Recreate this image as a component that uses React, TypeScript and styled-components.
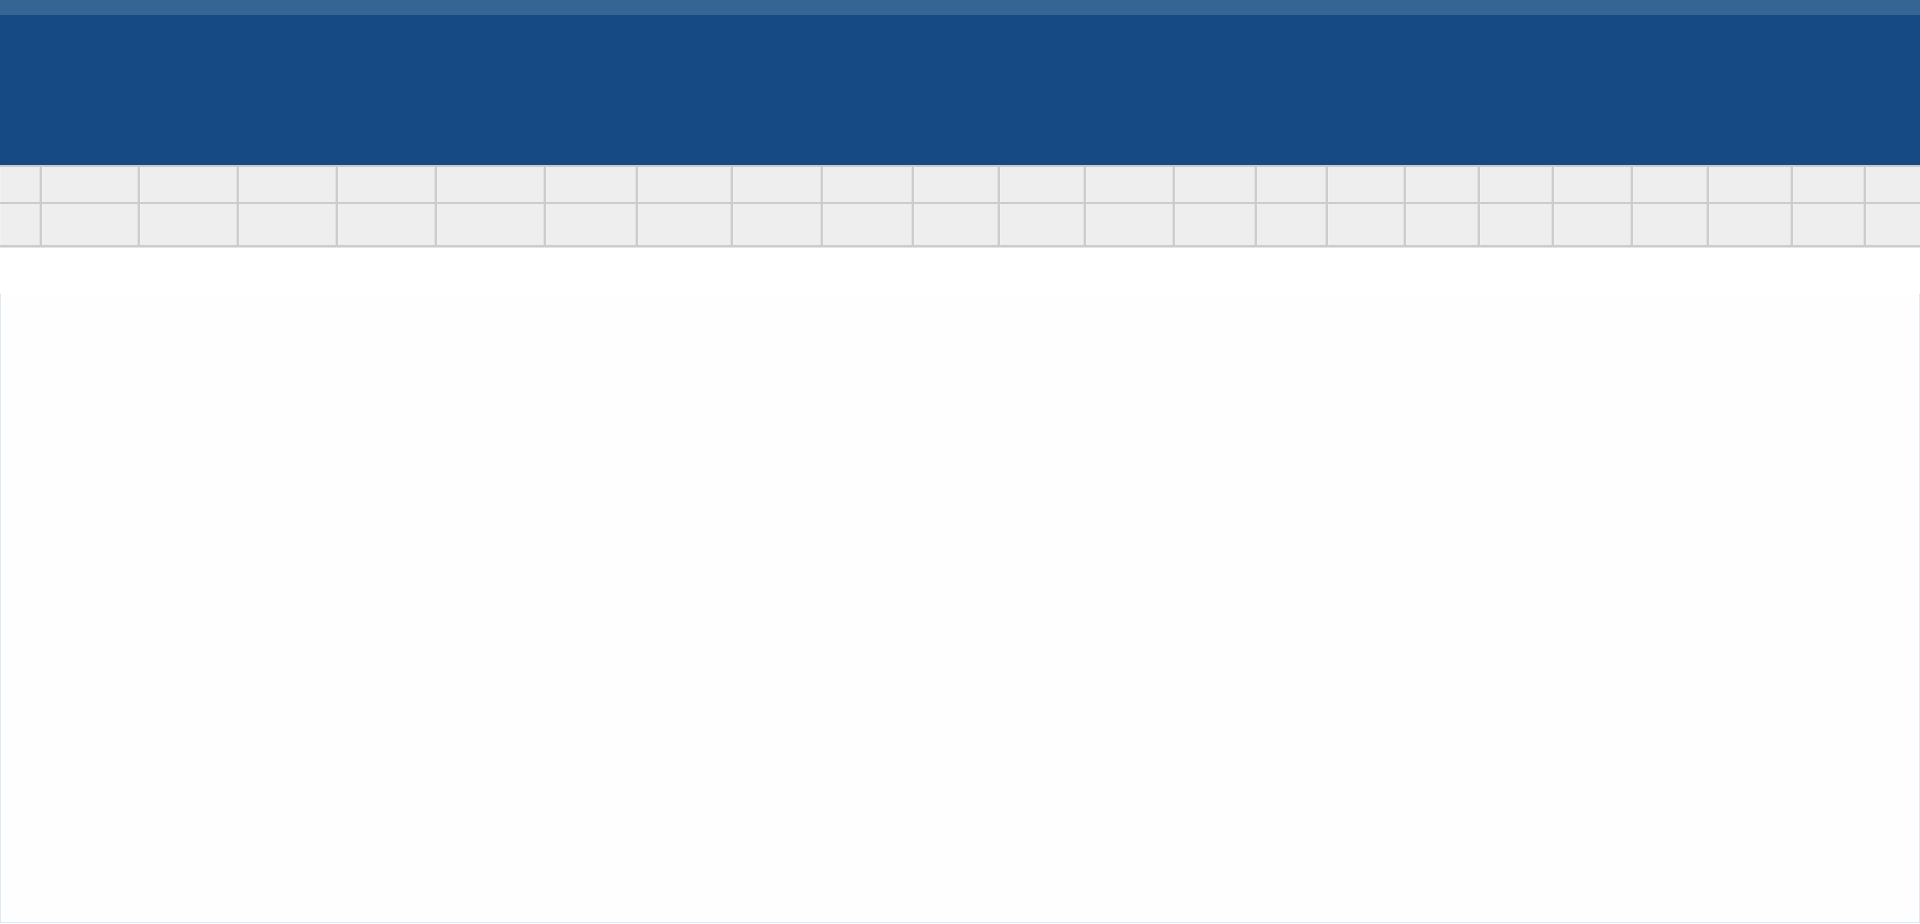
import React from 'react';
import styled, { createGlobalStyle } from 'styled-components';

const GlobalStyle = createGlobalStyle`
  html, body {
    margin: 0;
    padding: 0;
    background: #ffffff;
    overflow: hidden;
    font-family: "Liberation Sans", Arial, sans-serif;
  }
`;

// widths of the columns, taken so the separators land where the grid lines are
const columns: number[] = [
  42, 98, 99, 99, 99, 109, 92, 95, 90, 91, 86, 86, 89, 82, 71, 78, 74, 74, 79, 76, 84, 73, 120,
];

const App: React.FC = () => {
  return (
    <Page>
      <GlobalStyle />
      <TopStrip />
      <Header />
      <Grid>
        <Row $first $height={35}>
          {columns.map((w, i) => (
            <Cell key={i} $width={w} />
          ))}
        </Row>
        <Row $height={41}>
          {columns.map((w, i) => (
            <Cell key={i} $width={w} />
          ))}
        </Row>
      </Grid>
      <Content>
        <Panel />
      </Content>
    </Page>
  );
};

const Page = styled.div`
  width: 1920px;
  height: 924px;
  display: flex;
  flex-direction: column;
  overflow: hidden;
`;

const TopStrip = styled.div`
  height: 15px;
  background: #356594;
  flex-shrink: 0;
`;

const Header = styled.header`
  height: 150px;
  background: #154a85;
  flex-shrink: 0;
`;

const Grid = styled.div`
  display: flex;
  flex-direction: column;
  overflow: hidden;
  flex-shrink: 0;
  border-bottom: 1px solid #e4e4e4;
`;

const Row = styled.div<{ $first?: boolean; $height: number }>`
  display: flex;
  box-sizing: content-box;
  height: ${(p) => p.$height}px;
  border-top: ${(p) => (p.$first ? '2px solid #cccccc' : 'none')};
  border-bottom: 2px solid #cccccc;
`;

const Cell = styled.div<{ $width: number }>`
  box-sizing: border-box;
  flex: 0 0 ${(p) => p.$width}px;
  height: 100%;
  background: #eeeeee;
  border-right: 2px solid #cccccc;
  box-shadow: inset 1px 0 0 #f2f2f2, inset -1px 0 0 #e2e2e2;
`;

const Content = styled.main`
  flex: 1;
  display: flex;
  flex-direction: column;
  padding-top: 46px;
  padding-bottom: 1px;
  background: #ffffff;
`;

const Panel = styled.section`
  flex: 1;
  border: 1px solid #dde9f5;
  border-top: none;
  background: #fefefe;
`;

export default App;
